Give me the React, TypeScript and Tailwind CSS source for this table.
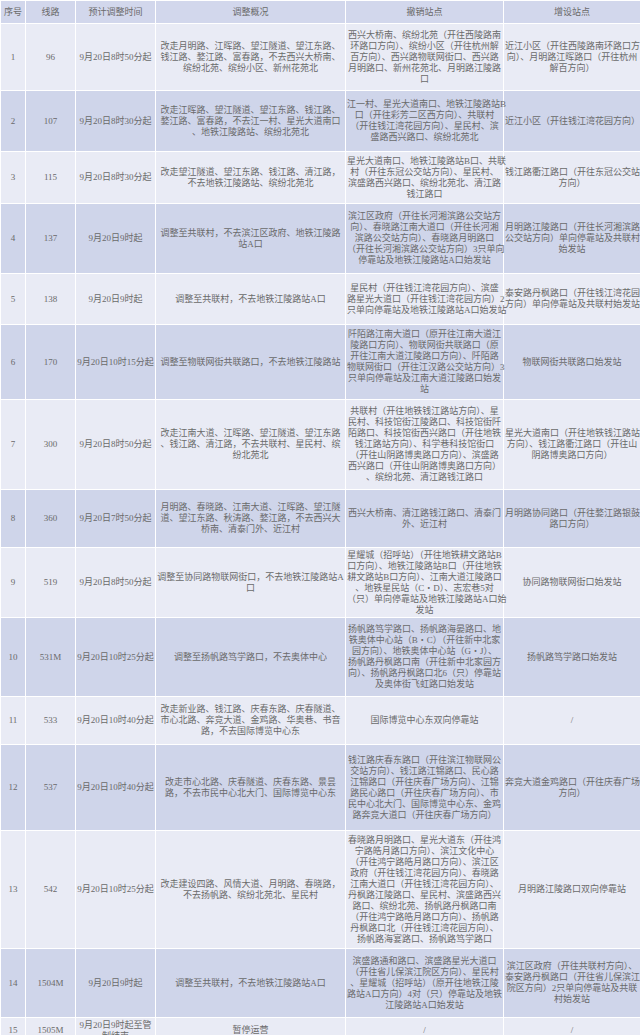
type Row = {
  no: string;
  line: string;
  time: string[];
  desc: string[];
  removed: string[];
  added: string[];
  h: string;
};

const rows: Row[] = [
  {
    no: "1",
    line: "96",
    time: ["9月20日8时50分起"],
    desc: ["改走月明路、江晖路、望江隧道、望江东路、", "钱江路、婺江路、富春路，不去西兴大桥南、", "缤纷北苑、缤纷小区、新州花苑北"],
    removed: ["西兴大桥南、缤纷北苑（开往西陵路南", "环路口方向）、缤纷小区（开往杭州解", "百方向）、西兴路物联网街口、西兴路", "月明路口、新州花苑北、月明路江陵路", "口"],
    added: ["近江小区（开往西陵路南环路口方", "向）、月明路江晖路口（开往杭州", "解百方向）"],
    h: "h-[67px]",
  },
  {
    no: "2",
    line: "107",
    time: ["9月20日8时30分起"],
    desc: ["改走江晖路、望江隧道、望江东路、钱江路、", "婺江路、富春路，不去江一村、星光大道南口", "、地铁江陵路站、缤纷北苑北"],
    removed: ["江一村、星光大道南口、地铁江陵路站B", "口（开往彩芳二区西方向）、共联村", "（开往钱江湾花园方向）、星民村、滨", "盛路西兴路口、缤纷北苑北"],
    added: ["近江小区（开往钱江湾花园方向）"],
    h: "h-[61px]",
  },
  {
    no: "3",
    line: "115",
    time: ["9月20日8时30分起"],
    desc: ["改走望江隧道、望江东路、钱江路、清江路，", "不去地铁江陵路站、缤纷北苑北"],
    removed: ["星光大道南口、地铁江陵路站B口、共联", "村（开往东冠公交站方向）、星民村、", "滨盛路西兴路口、缤纷北苑北、清江路", "钱江路口"],
    added: ["钱江路衢江路口（开往东冠公交站", "方向）"],
    h: "h-[52px]",
  },
  {
    no: "4",
    line: "137",
    time: ["9月20日9时起"],
    desc: ["调整至共联村，不去滨江区政府、地铁江陵路", "站A口"],
    removed: ["滨江区政府（开往长河湘滨路公交站方", "向）、春晓路江南大道口（开往长河湘", "滨路公交站方向）、春晓路月明路口", "（开往长河湘滨路公交站方向）3只单向", "停靠站及地铁江陵路站A口始发站"],
    added: ["月明路江陵路口（开往长河湘滨路", "公交站方向）单向停靠站及共联村", "始发站"],
    h: "h-[70px]",
  },
  {
    no: "5",
    line: "138",
    time: ["9月20日9时起"],
    desc: ["调整至共联村，不去地铁江陵路站A口"],
    removed: ["星民村（开往钱江湾花园方向）、滨盛", "路星光大道口（开往钱江湾花园方向）2", "只单向停靠站及地铁江陵路站A口始发站"],
    added: ["泰安路丹枫路口（开往钱江湾花园", "方向）单向停靠站及共联村始发站"],
    h: "h-[51px]",
  },
  {
    no: "6",
    line: "170",
    time: ["9月20日10时15分起"],
    desc: ["调整至物联网街共联路口，不去地铁江陵路站"],
    removed: ["阡陌路江南大道口（原开往江南大道江", "陵路口方向）、物联网街共联路口（原", "开往江南大道江陵路口方向）、阡陌路", "物联网街口（开往江汉路公交站方向）3", "只单向停靠站及江南大道江陵路口始发", "站"],
    added: ["物联网街共联路口始发站"],
    h: "h-[75px]",
  },
  {
    no: "7",
    line: "300",
    time: ["9月20日8时50分起"],
    desc: ["改走江南大道、江晖路、望江隧道、望江东路", "、钱江路、清江路，不去共联村、星民村、缤", "纷北苑北"],
    removed: ["共联村（开往地铁钱江路站方向）、星", "民村、科技馆街江陵路口、科技馆街阡", "陌路口、科技馆街西兴路口（开往地铁", "钱江路站方向）、科学巷科技馆街口", "（开往山阴路博奥路口方向）、滨盛路", "西兴路口（开往山阴路博奥路口方向）", "、缤纷北苑、清江路钱江路口"],
    added: ["星光大道南口（开往地铁钱江路站", "方向）、钱江路衢江路口（开往山", "阴路博奥路口方向）"],
    h: "h-[90px]",
  },
  {
    no: "8",
    line: "360",
    time: ["9月20日7时50分起"],
    desc: ["月明路、春晓路、江南大道、江晖路、望江隧", "道、望江东路、秋涛路、婺江路，不去西兴大", "桥南、清泰门外、近江村"],
    removed: ["西兴大桥南、清江路钱江路口、清泰门", "外、近江村"],
    added: ["月明路协同路口（开往婺江路银鼓", "路口方向）"],
    h: "h-[58px]",
  },
  {
    no: "9",
    line: "519",
    time: ["9月20日8时50分起"],
    desc: ["调整至协同路物联网街口，不去地铁江陵路站A", "口"],
    removed: ["星耀城（招呼站）（开往地铁耕文路站B", "口方向）、地铁江陵路站B口（开往地铁", "耕文路站B口方向）、江南大道江陵路口", "、地铁星民站（C・D）、志宏巷5对", "（只）单向停靠站及地铁江陵路站A口始", "发站"],
    added: ["协同路物联网街口始发站"],
    h: "h-[70px]",
  },
  {
    no: "10",
    line: "531M",
    time: ["9月20日10时25分起"],
    desc: ["调整至扬帆路笃学路口，不去奥体中心"],
    removed: ["扬帆路笃学路口、扬帆路海晏路口、地", "铁奥体中心站（B・C）（开往新中北家", "园方向）、地铁奥体中心站（G・J）、", "扬帆路丹枫路口南（开往新中北家园方", "向）、扬帆路丹枫路口北6（只）停靠站", "及奥体街飞虹路口始发站"],
    added: ["扬帆路笃学路口始发站"],
    h: "h-[79px]",
  },
  {
    no: "11",
    line: "533",
    time: ["9月20日10时40分起"],
    desc: ["改走新业路、钱江路、庆春东路、庆春隧道、", "市心北路、奔竞大道、金鸡路、华奥巷、书音", "路，不去国际博览中心东"],
    removed: ["国际博览中心东双向停靠站"],
    added: ["/"],
    h: "h-[48px]",
  },
  {
    no: "12",
    line: "537",
    time: ["9月20日10时40分起"],
    desc: ["改走市心北路、庆春隧道、庆春东路、景昙", "路，不去市民中心北大门、国际博览中心东"],
    removed: ["钱江路庆春东路口（开往滨江物联网公", "交站方向）、钱江路江锦路口、民心路", "江锦路口（开往庆春广场方向）、江锦", "路民心路口（开往庆春广场方向）、市", "民中心北大门、国际博览中心东、金鸡", "路奔竞大道口（开往庆春广场方向）"],
    added: ["奔竞大道金鸡路口（开往庆春广场", "方向）"],
    h: "h-[86px]",
  },
  {
    no: "13",
    line: "542",
    time: ["9月20日10时25分起"],
    desc: ["改走建设四路、风情大道、月明路、春晓路，", "不去扬帆路、缤纷北苑北、星民村"],
    removed: ["春晓路月明路口、星光大道东（开往鸿", "宁路皓月路口方向）、滨江文化中心", "（开往鸿宁路皓月路口方向）、滨江区", "政府（开往钱江湾花园方向）、春晓路", "江南大道口（开往钱江湾花园方向）、", "丹枫路江陵路口、星民村、滨盛路西兴", "路口、缤纷北苑、扬帆路丹枫路口南", "（开往鸿宁路皓月路口方向）、扬帆路", "丹枫路口北（开往钱江湾花园方向）、", "扬帆路海宴路口、扬帆路笃学路口"],
    added: ["月明路江陵路口双向停靠站"],
    h: "h-[118px]",
  },
  {
    no: "14",
    line: "1504M",
    time: ["9月20日9时起"],
    desc: ["调整至共联村，不去地铁江陵路站A口"],
    removed: ["滨盛路通和路口、滨盛路星光大道口", "（开往省儿保滨江院区方向）、星民村", "、星耀城（招呼站）（原开往地铁江陵", "路站A口方向）4对（只）停靠站及地铁", "江陵路站A口始发站"],
    added: ["滨江区政府（开往共联村方向）、", "泰安路丹枫路口（开往省儿保滨江", "院区方向）2只单向停靠站及共联", "村始发站"],
    h: "h-[69px]",
  },
  {
    no: "15",
    line: "1505M",
    time: ["9月20日9时起至管", "制结束"],
    desc: ["暂停运营"],
    removed: ["/"],
    added: ["/"],
    h: "h-[26px]",
  },
];

function Lines({ items }: { items: string[] }) {
  return (
    <>
      {items.map((t, i) => (
        <div key={i} className="whitespace-nowrap">
          {t}
        </div>
      ))}
    </>
  );
}

const cell = "border border-white px-[1px] text-center align-middle";

export default function App() {
  return (
    <div
      className="w-[640px] h-[1035px] overflow-hidden bg-white text-[9px] leading-[11px] text-[#6a6a6a]"
      style={{ fontFamily: '"Liberation Serif", "Noto Sans CJK SC", serif' }}
    >
      <table className="w-[640px] table-fixed border-collapse">
        <colgroup>
          <col className="w-[25px]" />
          <col className="w-[50px]" />
          <col className="w-[80px]" />
          <col className="w-[190px]" />
          <col className="w-[158px]" />
          <col className="w-[137px]" />
        </colgroup>
        <thead>
          <tr className="h-[23px] bg-[#d2d7ec]">
            <th className={`${cell} font-normal`}>序号</th>
            <th className={`${cell} font-normal`}>线路</th>
            <th className={`${cell} font-normal`}>预计调整时间</th>
            <th className={`${cell} font-normal`}>调整概况</th>
            <th className={`${cell} font-normal`}>撤销站点</th>
            <th className={`${cell} font-normal`}>增设站点</th>
          </tr>
        </thead>
        <tbody>
          {rows.map((r, i) => (
            <tr key={r.no} className={`${r.h} ${i % 2 === 0 ? "bg-[#e9ebf5]" : "bg-[#cfd5ea]"}`}>
              <td className={cell}>{r.no}</td>
              <td className={cell}>{r.line}</td>
              <td className={cell}>
                <Lines items={r.time} />
              </td>
              <td className={cell}>
                <Lines items={r.desc} />
              </td>
              <td className={cell}>
                <Lines items={r.removed} />
              </td>
              <td className={cell}>
                <Lines items={r.added} />
              </td>
            </tr>
          ))}
        </tbody>
      </table>
    </div>
  );
}
